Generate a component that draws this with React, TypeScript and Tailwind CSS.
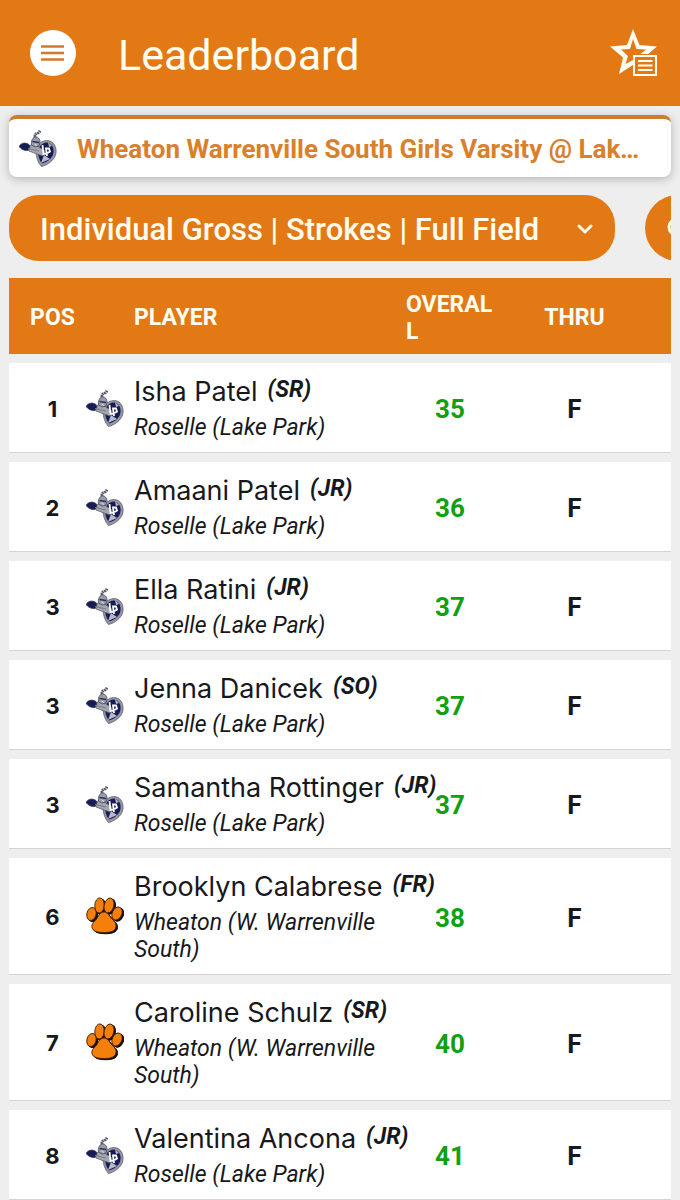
import { useState } from "react";
import { ChevronDown, Search } from "lucide-react";

type School = "lakePark" | "wheaton";

interface Player {
  pos: number;
  name: string;
  year: string;
  school: School;
  overall: number;
  thru: string;
}

const SCHOOL_NAMES: Record<School, string> = {
  lakePark: "Roselle (Lake Park)",
  wheaton: "Wheaton (W. Warrenville South)",
};

const PLAYERS: Player[] = [
  { pos: 1, name: "Isha Patel", year: "SR", school: "lakePark", overall: 35, thru: "F" },
  { pos: 2, name: "Amaani Patel", year: "JR", school: "lakePark", overall: 36, thru: "F" },
  { pos: 3, name: "Ella Ratini", year: "JR", school: "lakePark", overall: 37, thru: "F" },
  { pos: 3, name: "Jenna Danicek", year: "SO", school: "lakePark", overall: 37, thru: "F" },
  { pos: 3, name: "Samantha Rottinger", year: "JR", school: "lakePark", overall: 37, thru: "F" },
  { pos: 6, name: "Brooklyn Calabrese", year: "FR", school: "wheaton", overall: 38, thru: "F" },
  { pos: 7, name: "Caroline Schulz", year: "SR", school: "wheaton", overall: 40, thru: "F" },
  { pos: 8, name: "Valentina Ancona", year: "JR", school: "lakePark", overall: 41, thru: "F" },
];

function LancerLogo() {
  return (
    <svg width="38" height="38" viewBox="0 0 38 38" className="shrink-0" aria-hidden="true">
      {/* shield */}
      <path
        d="M20 15C23 12 28 10.500 32 12.500C36.500 15 38 21 36.500 26C35 31 29 36 22.500 37.500C19 34 17 28 17 22Z"
        fill="#9597a3"
        stroke="#5b5d6b"
        strokeWidth="0.800"
      />
      <path d="M21 17C24 13.500 28 12.500 31 14.500C35 17 35.500 23 33.500 27C31 31 27 33.500 23 34.500C20 31 19 26 19 22Z" fill="#181c56" />
      <path d="M22 34L25 26L31 30ZM29 13L33 17L30 18Z" fill="#b8bac4" />
      {/* arm and glove */}
      <path d="M8 17L13 16L20 18L26 22L24 27L18 25L10 22Z" fill="#a4a6b0" stroke="#5b5d6b" strokeWidth="0.800" />
      <path d="M0 17.500C2 14 6 13 10 15.500L11 18L9 21.500C5 22 2 20 0 17.500Z" fill="#181c56" stroke="#3b3e55" strokeWidth="0.800" />
      <path d="M9 19.500L20 22" stroke="#787b89" strokeWidth="1.200" />
      {/* school initials */}
      <path d="M23.500 16L24.500 25L27 24.500M28 27L27 19.500L30 19.500L31 22.500L28.500 24" fill="none" stroke="#ffffff" strokeWidth="1.800" />
      {/* helmet and plume */}
      <path d="M12.500 16C12 12 13 9 16 8C19 7.500 21 10 21 13L20 17L16 18Z" fill="#9a9ca8" stroke="#494c5d" strokeWidth="0.800" />
      <path d="M13.500 12.500L20 13.500" stroke="#2c315a" strokeWidth="1.600" />
      <path d="M15.500 15L18 16.500" stroke="#e1e2e7" strokeWidth="1" />
      <path d="M16 8C15.500 5.500 17 4.500 19 4C20.500 3.500 20.500 2.500 21 1.500" fill="none" stroke="#565968" strokeWidth="2.800" strokeDasharray="1.800 0.500" />
    </svg>
  );
}

function PawLogo() {
  const pads = (
    <>
      <ellipse cx="5.500" cy="17" rx="4.600" ry="6.600" transform="rotate(14 5.500 17)" />
      <ellipse cx="13.500" cy="8.500" rx="4.700" ry="7.600" transform="rotate(3 13.500 8.500)" />
      <ellipse cx="23" cy="8.500" rx="4.800" ry="7.600" transform="rotate(14 23 8.500)" />
      <ellipse cx="31" cy="16.500" rx="4.800" ry="6.800" transform="rotate(24 31 16.500)" />
      <path d="M18 15C21.500 15 23.500 19 25.500 21.500C28 24 30.500 26 30 29.500C29.500 34 25 35.500 18.500 35.500C11.500 35.500 7 34.500 6 30.500C5 26.500 9 24.500 11 21.500C12.500 18.500 14.500 15 18 15Z" />
    </>
  );
  return (
    <svg width="38" height="38" viewBox="0 0 38 38" className="shrink-0" aria-hidden="true">
      <g fill="#120a05" stroke="#120a05" transform="translate(1.500 1.200)">{pads}</g>
      <g fill="#f57f0b" stroke="#3d1f05" strokeWidth="0.900">{pads}</g>
    </svg>
  );
}

function FavoritesIcon() {
  return (
    <svg width="48" height="48" viewBox="0 0 48 48" fill="none" aria-hidden="true">
      <path
        fillRule="evenodd"
        fill="#fffdf0"
        d="M23 0L29.500 16L47 17.500L33.500 29L37 45L23 36L9 45L13 28.500L0 17.500L17 16ZM23 10L20 20L11 20.500L18 27L15.500 35L23 31L30 35L28 27L36 20.500L26.500 20Z"
      />
      <path d="M23 25H48V48H23Z" fill="#e27914" />
      <path d="M24 27H46V46H24Z" stroke="#fffdf0" strokeWidth="2" />
      <path d="M28 32H42.500M28 36.500H42.500M28 41H42.500" stroke="#fffdf0" strokeWidth="2" />
    </svg>
  );
}

export default function App() {
  const [view, setView] = useState("gross");

  return (
    <div className="h-screen overflow-hidden bg-[#eeeeee] font-['Roboto',sans-serif] text-[#17181c]">
      <header className="flex h-[106px] items-center bg-[#e27914] pr-[22px] pl-[30px]">
        <button
          type="button"
          aria-label="Menu"
          className="flex size-[46px] items-center justify-center rounded-full bg-white"
        >
          <svg width="24" height="18" viewBox="0 0 24 18" aria-hidden="true">
            <path d="M0 2.500H23M0 9H23M0 15.500H23" stroke="#cf7a2e" strokeWidth="2.400" />
          </svg>
        </button>
        <h1 className="ml-[42px] flex-1 pt-1 text-[43px] leading-[52px] text-[#fffdf0]">Leaderboard</h1>
        <button type="button" aria-label="Favorites">
          <FavoritesIcon />
        </button>
      </header>

      <main className="px-[9px] pt-[9px]">
        <a
          href="#event"
          className="flex h-[62px] items-center gap-5 rounded-lg border-t-4 border-[#d27a2c] bg-white pr-5 pl-[10px] text-[#d8802b] shadow-[0_2px_10px_rgba(0,0,0,0.25)]"
        >
          <LancerLogo />
          <span className="min-w-0 flex-1 truncate pt-0.5 text-[26px] font-bold">
            Wheaton Warrenville South Girls Varsity @ Lake Park
          </span>
        </a>

        <div className="mt-[18px] flex gap-[30px] overflow-hidden">
          <div className="relative w-[606px] shrink-0">
            <select
              aria-label="Leaderboard view"
              value={view}
              onChange={(e) => setView(e.target.value)}
              className="h-[66px] w-full appearance-none rounded-[30px] bg-[#e27914] pt-1 pr-14 pl-[31px] text-[31px] font-medium text-[#fffdf0]"
            >
              <option value="gross">Individual Gross | Strokes | Full Field</option>
              <option value="team">Team Gross | Strokes | Full Field</option>
            </select>
            <ChevronDown
              size={24}
              strokeWidth={3}
              className="pointer-events-none absolute top-[22px] right-[18px] text-[#fffdf0]"
            />
          </div>
          <button
            type="button"
            aria-label="Search"
            className="flex size-[66px] shrink-0 items-center justify-center rounded-full bg-[#e27914] text-[#fffdf0]"
          >
            <Search size={24} strokeWidth={3} />
          </button>
        </div>

        <table className="mt-2 w-full table-fixed border-separate border-spacing-x-0 border-spacing-y-[9px]">
          <colgroup>
            <col className="w-[77px]" />
            <col className="w-12" />
            <col />
            <col className="w-[88px]" />
            <col className="w-[177px]" />
          </colgroup>
          <thead>
            <tr className="h-[76px] bg-[#e27914] text-[23px] leading-[27px] text-[#fffdf0] *:pt-[3px]">
              <th scope="col" className="pl-[10px] font-bold">POS</th>
              <td />
              <th scope="col" className="text-left font-bold">PLAYER</th>
              <th scope="col" className="text-left font-bold break-all">OVERALL</th>
              <th scope="col" className="pr-4 font-bold">THRU</th>
            </tr>
          </thead>
          <tbody>
            {PLAYERS.map((player) => (
              <tr key={player.name} className="bg-white *:border-b *:border-[#d4d4d8]">
                <td className="pt-[3px] pl-[10px] text-center font-['Inter',sans-serif] text-[22px] font-bold">
                  {player.pos}
                </td>
                <td>{player.school === "lakePark" ? <LancerLogo /> : <PawLogo />}</td>
                <td className="pt-[10px] pb-[11px]">
                  <div className="font-['Inter',sans-serif] text-[27px] leading-[38px] whitespace-nowrap">
                    {player.name}
                    <span className="ml-[10px] align-[4px] font-['Roboto',sans-serif] text-[23px] leading-none font-bold italic">
                      ({player.year})
                    </span>
                  </div>
                  <div className="mt-[3px] text-[23px] leading-[27px] italic">
                    {SCHOOL_NAMES[player.school]}
                  </div>
                </td>
                <td className="pt-1 text-center text-[26px] font-bold text-[#11a011]">{player.overall}</td>
                <td className="pt-1 pr-4 text-center text-[26px] font-bold">{player.thru}</td>
              </tr>
            ))}
          </tbody>
        </table>
      </main>
    </div>
  );
}
